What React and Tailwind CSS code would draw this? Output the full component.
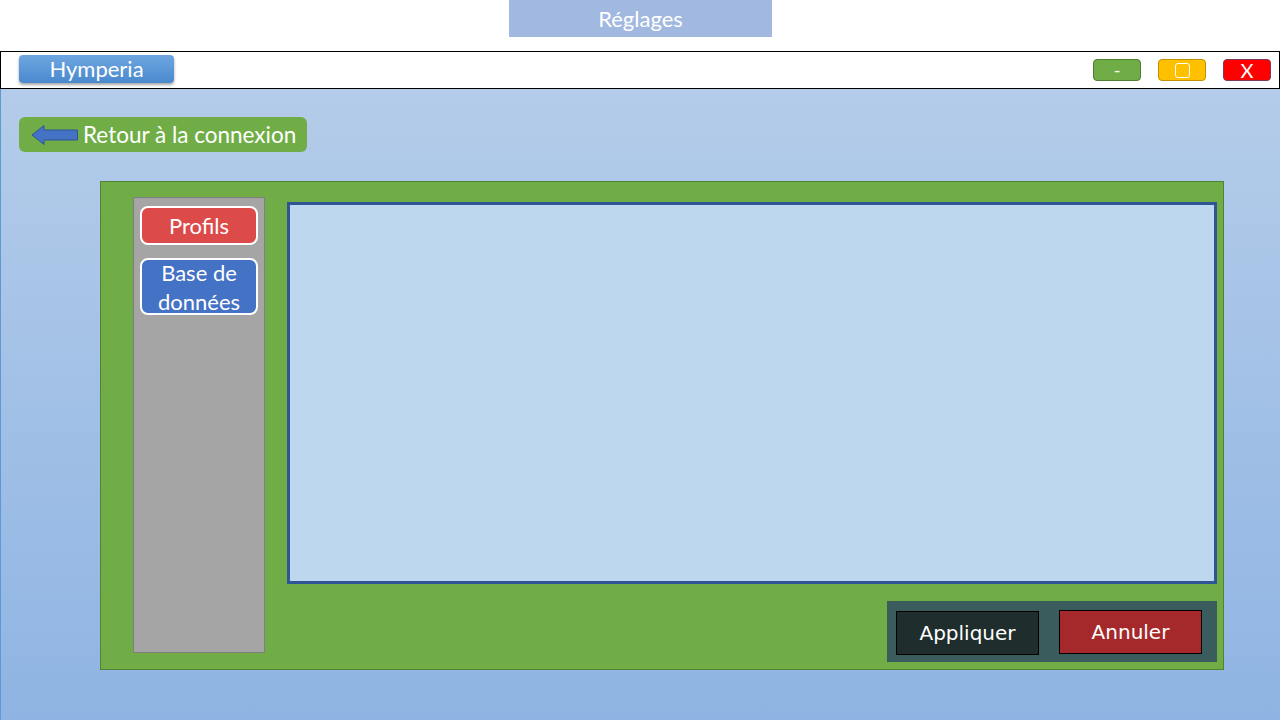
import React from 'react';

const BackArrow = () => (
  <svg width="48" height="22" viewBox="0 0 48 22">
    <path
      d="M1 11 L13 1.5 L13 6 L46.5 6 L46.5 16 L13 16 L13 20.5 Z"
      fill="#4472c4"
      stroke="#2f5597"
      strokeWidth="1"
      strokeLinejoin="round"
    />
  </svg>
);

const App = () => {
  const calibri = { fontFamily: 'Lato, "Open Sans", sans-serif' };

  return (
    <div className="w-[1280px] h-[720px] flex flex-col overflow-hidden bg-white" style={calibri}>
      {/* Top tab */}
      <div className="h-[51px] flex justify-center">
        <div className="w-[263px] h-[37px] bg-[#a1b8e0] flex items-center justify-center text-white text-[22px] ml-[1px]">
          Réglages
        </div>
      </div>

      {/* Title bar */}
      <div className="h-[38px] border border-black bg-white flex items-center pl-[18px] pr-[8px]">
        <div className="w-[155px] h-[28px] rounded-[4px] bg-gradient-to-b from-[#6ea6e0] to-[#4a89cf] shadow-[0_2px_3px_rgba(0,0,0,0.35)] flex items-center justify-center text-white text-[22px] mb-[3px]">
          Hymperia
        </div>
        <div className="ml-auto flex items-center gap-[17px]">
          <div className="w-[48px] h-[22px] rounded-[4px] bg-[#70ad47] border border-[#507e32] flex items-center justify-center text-white text-[18px] leading-none">
            -
          </div>
          <div className="w-[48px] h-[22px] rounded-[4px] bg-[#ffc000] border border-[#bf9000] flex items-center justify-center">
            <div className="w-[15px] h-[15px] rounded-[3px] border-[1.5px] border-white" />
          </div>
          <div className="w-[48px] h-[22px] rounded-[4px] bg-[#ff0000] border border-[#7a3a5a] flex items-center justify-center text-white text-[20px] leading-none">
            X
          </div>
        </div>
      </div>

      {/* Main area */}
      <div className="flex-1 bg-gradient-to-b from-[#b4cce9] to-[#8fb4e3] border-l border-[#5b9bd5] pl-[18px] pt-[28px]">
        <div className="w-[288px] h-[35px] rounded-[6px] bg-[#70ad47] flex items-center pl-[12px] gap-[4px] text-white text-[22.5px]">
          <BackArrow />
          <span>Retour à la connexion</span>
        </div>

        {/* Settings panel */}
        <div className="mt-[29px] ml-[81px] w-[1124px] h-[489px] bg-[#70ad47] border border-[#548235] flex pl-[32px] pt-[15px] pr-[5px]">
          {/* Sidebar */}
          <div className="w-[132px] h-[456px] bg-[#a5a5a5] border border-[#7f7f7f] flex flex-col items-center pt-[8px] gap-[13px]">
            <div className="w-[118px] h-[39px] rounded-[8px] bg-[#dc4a4a] border-2 border-white flex items-center justify-center text-white text-[22px]">
              Profils
            </div>
            <div className="w-[118px] h-[57px] rounded-[8px] bg-[#4472c4] border-2 border-white flex items-center justify-center text-center text-white text-[22px] leading-[29px]">
              Base de<br />données
            </div>
          </div>

          {/* Right column */}
          <div className="ml-[22px] flex-1 flex flex-col pt-[5px]">
            <div className="w-[930px] h-[382px] bg-[#bdd7ee] border-[3px] border-[#2f5597]" />
            <div className="mt-[17px] self-end mr-[1px] w-[330px] h-[61px] bg-[#3a5c5c] flex items-center px-[9px] gap-[20px]" style={{ fontFamily: '"DejaVu Sans", Verdana, sans-serif' }}>
              <div className="w-[143px] h-[44px] bg-[#1f2d2d] border border-black flex items-center justify-center text-white text-[20px] mt-[2px]">
                Appliquer
              </div>
              <div className="w-[143px] h-[44px] bg-[#a5292a] border border-black flex items-center justify-center text-white text-[20px]">
                Annuler
              </div>
            </div>
          </div>
        </div>
      </div>
    </div>
  );
};

export default App;
